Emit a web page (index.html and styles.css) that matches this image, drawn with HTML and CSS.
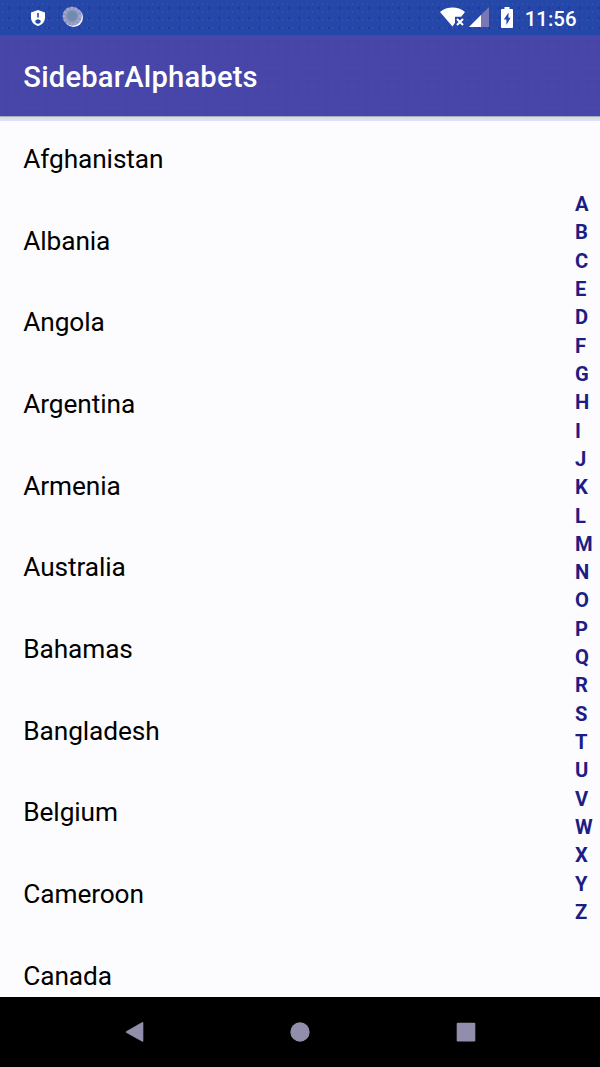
FILE: index.html
```
<!DOCTYPE html>
<html lang="en">
<head>
<meta charset="utf-8">
<title>SidebarAlphabets</title>
<link rel="stylesheet" href="styles.css">
</head>
<body>
<div class="screen">
  <header class="status">
    <svg class="shield" viewBox="0 0 14 16"><path fill="#fff" d="M7 0L14 2.6V7.5C14 11.8 11 15 7 16 3 15 0 11.8 0 7.5V2.6Z"/><path fill="#2448a8" d="M6.2 3h1.6v4.6H6.2zM4.2 10.8Q7 7.6 9.8 10.8 9.6 13.8 7 13.8 4.4 13.8 4.2 10.8z"/></svg>
    <svg class="globe" viewBox="0 0 22 22"><circle cx="11.5" cy="11.5" r="9.5" fill="#f4f4ff"/><circle cx="10.2" cy="10.2" r="9.5" fill="#8a98bd"/><circle cx="10.2" cy="10.2" r="8" fill="none" stroke="#a9a7cf" stroke-width="3" stroke-dasharray="2 2"/><circle cx="10.2" cy="10" r="5" fill="#718bb0"/></svg>
    <span class="spacer"></span>
    <svg class="wifi" viewBox="0 0 26 20"><path fill="#fff" d="M0 5C7-.9 18-.9 25 5L21.2 9.7H15V15.8L12.5 19.5Z"/><path d="M17 12l6 6M23 12l-6 6" stroke="#fff" stroke-width="2"/></svg>
    <svg class="signal" viewBox="0 0 20 20"><path fill="#7978b5" d="M20 0V20H0z"/><path fill="#fff" d="M12 8V20H0z"/></svg>
    <svg class="battery" viewBox="0 0 12 21"><path fill="#fff" d="M3.5 0h5v2H11q1 0 1 1v17q0 1-1 1H1q-1 0-1-1V3q0-1 1-1h2.5z"/><path fill="#2448a8" d="M7.5 5.5L2.8 12.5H5.4V18L9.6 10.7H7.5z"/></svg>
    <span class="clock">11:56</span>
  </header>
  <div class="appbar">
    <h1 class="title">SidebarAlphabets</h1>
  </div>
  <main class="content">
    <ul class="countries">
      <li>Afghanistan</li><li>Albania</li><li>Angola</li><li>Argentina</li><li>Armenia</li><li>Australia</li><li>Bahamas</li><li>Bangladesh</li><li>Belgium</li><li>Cameroon</li><li>Canada</li>
    </ul>
    <ul class="letters">
      <li>A</li><li>B</li><li>C</li><li>E</li><li>D</li><li>F</li><li>G</li><li>H</li><li>I</li><li>J</li><li>K</li><li>L</li><li>M</li><li>N</li><li>O</li><li>P</li><li>Q</li><li>R</li><li>S</li><li>T</li><li>U</li><li>V</li><li>W</li><li>X</li><li>Y</li><li>Z</li>
    </ul>
  </main>
  <nav class="nav">
    <svg viewBox="0 0 20 20"><path fill="#918eab" d="M17 .3Q18.3-.3 18.3 1V19Q18.3 20.2 17 19.6L1.3 10.8Q.3 10 1.3 9.2z"/></svg>
    <svg viewBox="0 0 20 20"><circle cx="10" cy="10" r="9.7" fill="#918eab"/></svg>
    <svg viewBox="0 0 20 20"><rect x=".7" y=".7" width="18.6" height="18.8" rx="1.2" fill="#918eab"/></svg>
  </nav>
</div>
</body>
</html>
```
FILE: styles.css
```
body { margin: 0; font-family: Roboto, sans-serif; }
ul, h1 { margin: 0; padding: 0; list-style: none; }
svg { display: block; flex: none; }
.screen { width: 600px; height: 1067px; display: flex; flex-direction: column; overflow: hidden; background: #fcfcff; }
.status {
  height: 35px; flex: none; display: flex; box-sizing: border-box; padding: 0 23.5px 0 31px;
  background-color: #2448a8;
  background-image: radial-gradient(circle, #4549b2 0.8px, transparent 1.1px), radial-gradient(circle, #2734b2 0.8px, transparent 1.1px);
  background-size: 5px 8px, 10px 10px;
  background-position: 0 0, 4px 3px;
}
.shield { width: 14px; height: 16px; margin: 10px 17px 0 0; }
.globe { width: 22px; height: 22px; margin-top: 6px; }
.spacer { flex: 1; }
.wifi { width: 26px; height: 20px; margin: 7px 3px 0 0; }
.signal { width: 20px; height: 20px; margin: 7px 12px 0 0; }
.battery { width: 12px; height: 21px; margin: 7px 11.5px 0 0; }
.clock { color: #fff; font-size: 20.4px; font-weight: 500; line-height: 38px; }
/* fine dot grid: vertical dot-colored stripes showing through horizontal slits */
.appbar {
  height: 81px; flex: none; display: flex; align-items: center; padding-left: 23.3px; z-index: 1;
  background-color: #4846a8;
  background-image:
    linear-gradient(to bottom, #4846a8 0 5px, transparent 5px 6px, #4846a8 6px 7px, transparent 7px 8px, #4846a8 8px 9px, transparent 9px 10px),
    linear-gradient(to right, transparent 0 5px, #1c52b0 5px 6px, transparent 6px 7px, #1c52b0 7px 8px, transparent 8px 9px, #1c52b0 9px 10px);
  background-size: 10px 10px;
  box-shadow: 0 1px #9cabc1, 0 3px #deded9, 0 5px #dedfff;
}
.title { color: #fff; font-size: 29.17px; font-weight: 500; letter-spacing: 0.2px; line-height: 34px; padding-top: 3px; }
.content { height: 881px; flex: none; display: flex; justify-content: space-between; overflow: hidden; }
.countries { padding-left: 23.3px; font-size: 26.25px; letter-spacing: -0.1px; color: #000; }
.countries li { height: 81.67px; line-height: 86.6px; }
.letters { padding-top: 73.9px; width: 25px; font-size: 20.2px; font-weight: 700; color: #1d1d85; }
.letters li { height: 28.34px; line-height: 28.34px; }
.nav { height: 70px; flex: none; display: flex; align-items: center; justify-content: space-between; box-sizing: border-box; padding: 0 124.5px; background: #000; }
.nav svg { width: 20px; height: 20px; }
```
